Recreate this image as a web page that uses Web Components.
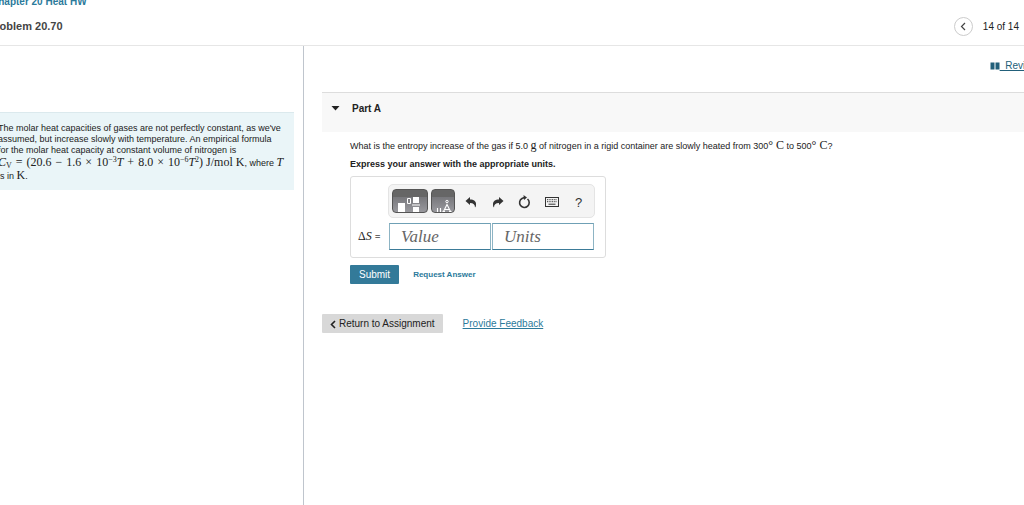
<!DOCTYPE html>
<html lang="en">
<head>
<meta charset="utf-8">
<title>Problem 20.70</title>
<style>
html,body{margin:0;height:100%;overflow:hidden;background:#fff}
body{font:9px/11px "Liberation Sans",Arial,sans-serif;color:#222}
</style>
</head>
<body>
<homework-page></homework-page>

<template id="page-t">
<style>
:host{display:flex;flex-direction:column;min-height:100vh;overflow:hidden}
main{display:flex;flex:1;min-height:0}
aside{flex:none;width:303px;border-right:1px solid #bfc5cd;padding-top:66px}
section{flex:1;min-width:0;padding:14px 0 0 18px}
.tools{display:flex;justify-content:flex-end;margin-right:-14px}
.actions{display:flex;align-items:center;gap:20px;padding:30px 0 0}
.actions button{display:flex;align-items:center;gap:3px;border:0;border-radius:1px;background:#d8d8d8;color:#222;font:10px/12px "Liberation Sans",Arial,sans-serif;padding:4px 8px 3px;height:19px}
a{color:#2b7a9b;font-size:10px;line-height:12px;white-space:pre}
.tools a{display:flex;align-items:center;color:#22607a;text-decoration:none}
.tools span{text-decoration:underline}
</style>
<page-header heading="Problem 20.70" position="14 of 14">Chapter 20 Heat HW</page-header>
<main>
<aside><problem-intro></problem-intro></aside>
<section>
<div class="tools"><a href="#review"><svg width="10" height="8" viewBox="0 0 10 8" aria-hidden="true"><path d="M.5 .5h4v7h-4zM5.500 .5h4v7h-4z" fill="#22607a"/></svg><span>&nbsp; Review</span></a></div>
<problem-part heading="Part A">
<question-text></question-text>
<answer-box></answer-box>
</problem-part>
<div class="actions"><button type="button"><svg width="6" height="9" viewBox="0 0 6 9" aria-hidden="true"><path d="M5 1 1.500 4.500 5 8" fill="none" stroke="#222" stroke-width="1.600"/></svg>Return to Assignment</button><a href="#feedback">Provide Feedback</a></div>
</section>
</main>
</template>

<template id="header-t">
<style>
:host{display:block;border-bottom:1px solid #e6e6e6}
header{display:flex;align-items:flex-start;justify-content:space-between;height:45px;white-space:nowrap}
.title{margin:-4px 0 0 -9px}
a{display:block;color:#2b7a9b;font-weight:bold;font-size:10px;line-height:12px;text-decoration:none}
h1{margin:11px 0 0 -3px;font-size:11px;line-height:14px;color:#444}
nav{display:flex;align-items:center;gap:10px;padding:17px 5px 0 0;font-size:10px;line-height:12px}
button{display:flex;align-items:center;justify-content:center;width:19px;height:19px;padding:0;border:1px solid #ccc;border-radius:50%;background:#fff}
</style>
<header><div class="title"><a href="#chapter"><slot></slot></a><h1></h1></div>
<nav><button type="button" aria-label="Previous problem"><svg width="6" height="9" viewBox="0 0 6 9"><path d="M5 1 1.500 4.500 5 8" fill="none" stroke="#444" stroke-width="1.200"/></svg></button><span></span></nav></header>
</template>

<template id="intro-t">
<style>
:host{display:block;margin-right:9px;background:#eaf5f8;border-top:1px solid #dbe9ed;padding:10px 0 8px;overflow:hidden}
p{margin:0 0 0 -2px;white-space:nowrap;font-size:9px;line-height:11px}
.line{display:block}
.math{line-height:12px}
math-text{font-size:12px}
b{font-weight:normal;padding:0 4px}
sup{font-size:8px;line-height:0;vertical-align:4px}
sub{font-size:8px;line-height:0;vertical-align:-2px}
</style>
<p><span class="line">The molar heat capacities of gases are not perfectly constant, as we've</span><span class="line">assumed, but increase slowly with temperature. An empirical formula</span><span class="line">for the molar heat capacity at constant volume of nitrogen is</span><span class="line math"><math-text><i>C</i><sub>V</sub><b>=</b>(20.6<b>−</b>1.6<b>×</b>10<sup>−3</sup><i>T</i><b>+</b>8.0<b>×</b>10<sup>−6</sup><i>T</i><sup>2</sup>) J/mol K</math-text>, where <math-text><i>T</i></math-text></span><span class="line math">is in <math-text>K</math-text>.</span></p>
</template>

<template id="math-t"><style>:host{display:inline;font-family:"Liberation Serif",serif}</style><slot></slot></template>

<template id="part-t">
<style>
:host{display:block;margin-top:20px}
header{background:#f8f8f8;border-top:1px solid #ddd;height:39px}
button{display:flex;align-items:center;gap:12px;border:0;background:none;padding:9px 9px;font:bold 10px/13px "Liberation Sans",Arial,sans-serif;color:#222}
.body{padding:6px 0 0 28px}
</style>
<header><button type="button" aria-expanded="true"><svg width="9" height="5" viewBox="0 0 9 5" aria-hidden="true"><path d="M.5 0h8L4.500 4.500z" fill="#222"/></svg><span></span></button></header>
<div class="body"><slot></slot></div>
</template>

<template id="question-t">
<style>
:host{display:block;font-size:9px}
p{margin:0;line-height:14px}
p+p{font-weight:bold;margin-top:4px}
math-text{font-size:12px}
</style>
<p>What is the entropy increase of the gas if 5.0 <math-text>g</math-text> of nitrogen in a rigid container are slowly heated from 300<math-text>° C</math-text> to 500<math-text>° C</math-text>?</p>
<p>Express your answer with the appropriate units.</p>
</template>

<template id="answer-t">
<style>
:host{display:block;margin-top:5px}
.box{box-sizing:border-box;width:256px;border:1px solid #ddd;border-radius:3px;padding:7px 11px 7px 7px}
.bar{display:flex;align-items:center;height:32px;margin:0 -1px 0 30px;background:#f4f4f4;border:1px solid #e4e4e4;border-radius:5px;box-sizing:content-box}
button{font-family:inherit}
.bar button{display:flex;align-items:center;justify-content:center;flex:none;border:0;padding:2px 0 0;background:none;width:27px;height:24px;font-size:13px;color:#333;box-sizing:border-box}
.bar .tile{width:24px;margin-left:3px;padding:0;border:1px solid #555;border-radius:4px;background:linear-gradient(#666 30%,#77777b 31%,#99999e)}
.bar .wide{width:36px}
.bar .undo{margin-left:2px}
.row{display:flex;align-items:center;margin-top:5px}
label{width:31px;font-size:12px;line-height:14px;white-space:nowrap}
label span{font-weight:bold;font-size:9px;color:#666}
input{box-sizing:border-box;flex:1;min-width:0;height:27px;border:1px solid #8db4c4;border-bottom-color:#3b7b98;border-top-color:#6fa0b5;padding:0 11px;background:#fff;font:italic 17px/20px "Liberation Serif",serif;border-radius:0}
input+input{margin-left:1px}
input::placeholder{color:#666;opacity:1}
.send{display:flex;align-items:center;gap:14px;margin-top:7px}
.submit{border:0;border-radius:1px;background:#337a99;color:#fff;font-size:10px;line-height:12px;height:19px;padding:0 9px}
a{color:#2b7a9b;font-weight:bold;font-size:8px;text-decoration:none}
</style>
<form onsubmit="return false">
<div class="box">
<div class="bar">
<button type="button" class="tile wide" aria-label="Templates"><svg width="34" height="22" viewBox="0 0 34 22"><path d="M5 13h7v9H5zM20 7h6v6h-6zM20 17h6v5h-6zM19 14.500h8v1h-8z" fill="#fff"/><path d="M14.500 8.500h3v5h-3z" fill="none" stroke="#fff"/></svg></button>
<button type="button" class="tile" aria-label="Units and symbols"><svg width="22" height="22" viewBox="0 0 22 22"><path d="M5.500 18v4M8.500 18v4M11.500 21.500 15 14.500l3.500 7M12.500 19.500h5M10.500 21.500h2.500M17 21.500h2.500" fill="none" stroke="#fff" stroke-width="1.100"/><circle cx="15" cy="11.500" r="1.200" fill="none" stroke="#fff"/></svg></button>
<button type="button" class="undo" aria-label="Undo"><svg width="12" height="11" viewBox="0 0 12 11"><path d="M.5 4 5 0v2.500c4 0 6 2 6 4.500 0 2 0 2.500-1 3.500 0-3-1.500-4.500-5-4.500v2z" fill="#333"/></svg></button>
<button type="button" aria-label="Redo"><svg width="12" height="11" viewBox="0 0 12 11"><path d="M11.500 4 7 0v2.500C3 2.500 1 4.500 1 7c0 2 0 2.500 1 3.500 0-3 1.500-4.500 5-4.500v2z" fill="#333"/></svg></button>
<button type="button" aria-label="Reset"><svg width="13" height="14" viewBox="0 0 13 14"><path d="M9.500 4A4.800 4.800 0 1 1 4 3.500L6.500 2.500" fill="none" stroke="#333" stroke-width="1.600"/><path d="M5.500 0 9 2.500 6 5z" fill="#333"/></svg></button>
<button type="button" aria-label="Keyboard shortcuts"><svg width="14" height="10" viewBox="0 0 14 10"><rect x=".5" y=".5" width="13" height="9" fill="none" stroke="#333"/><path d="M2 2.700h10M2 4.700h10" stroke="#333" stroke-dasharray="1 .7"/><path d="M3.500 7.200h7" stroke="#333"/></svg></button>
<button type="button" aria-label="Help">?</button>
</div>
<div class="row"><label for="value"><math-text>Δ<i>S</i></math-text> <span>=</span></label><input id="value" type="text" placeholder="Value"><input type="text" placeholder="Units" aria-label="Units"></div>
</div>
<div class="send"><button class="submit" type="submit">Submit</button><a href="#answer">Request Answer</a></div>
</form>
</template>

<script>
function mount(host,id){
  const root=host.attachShadow({mode:"open"});
  root.append(document.getElementById(id).content.cloneNode(true));
  return root;
}
class MathText extends HTMLElement{constructor(){super();mount(this,"math-t")}}
class PageHeader extends HTMLElement{
  connectedCallback(){
    if(this.shadowRoot)return;
    const r=mount(this,"header-t");
    r.querySelector("h1").textContent=this.getAttribute("heading");
    r.querySelector("span").textContent=this.getAttribute("position");
  }
}
class ProblemIntro extends HTMLElement{constructor(){super();mount(this,"intro-t")}}
class ProblemPart extends HTMLElement{
  connectedCallback(){
    if(this.shadowRoot)return;
    mount(this,"part-t").querySelector("span").textContent=this.getAttribute("heading");
  }
}
class QuestionText extends HTMLElement{constructor(){super();mount(this,"question-t")}}
class AnswerBox extends HTMLElement{constructor(){super();mount(this,"answer-t")}}
class HomeworkPage extends HTMLElement{constructor(){super();mount(this,"page-t")}}
customElements.define("math-text",MathText);
customElements.define("page-header",PageHeader);
customElements.define("problem-intro",ProblemIntro);
customElements.define("problem-part",ProblemPart);
customElements.define("question-text",QuestionText);
customElements.define("answer-box",AnswerBox);
customElements.define("homework-page",HomeworkPage);
</script>
</body>
</html>
